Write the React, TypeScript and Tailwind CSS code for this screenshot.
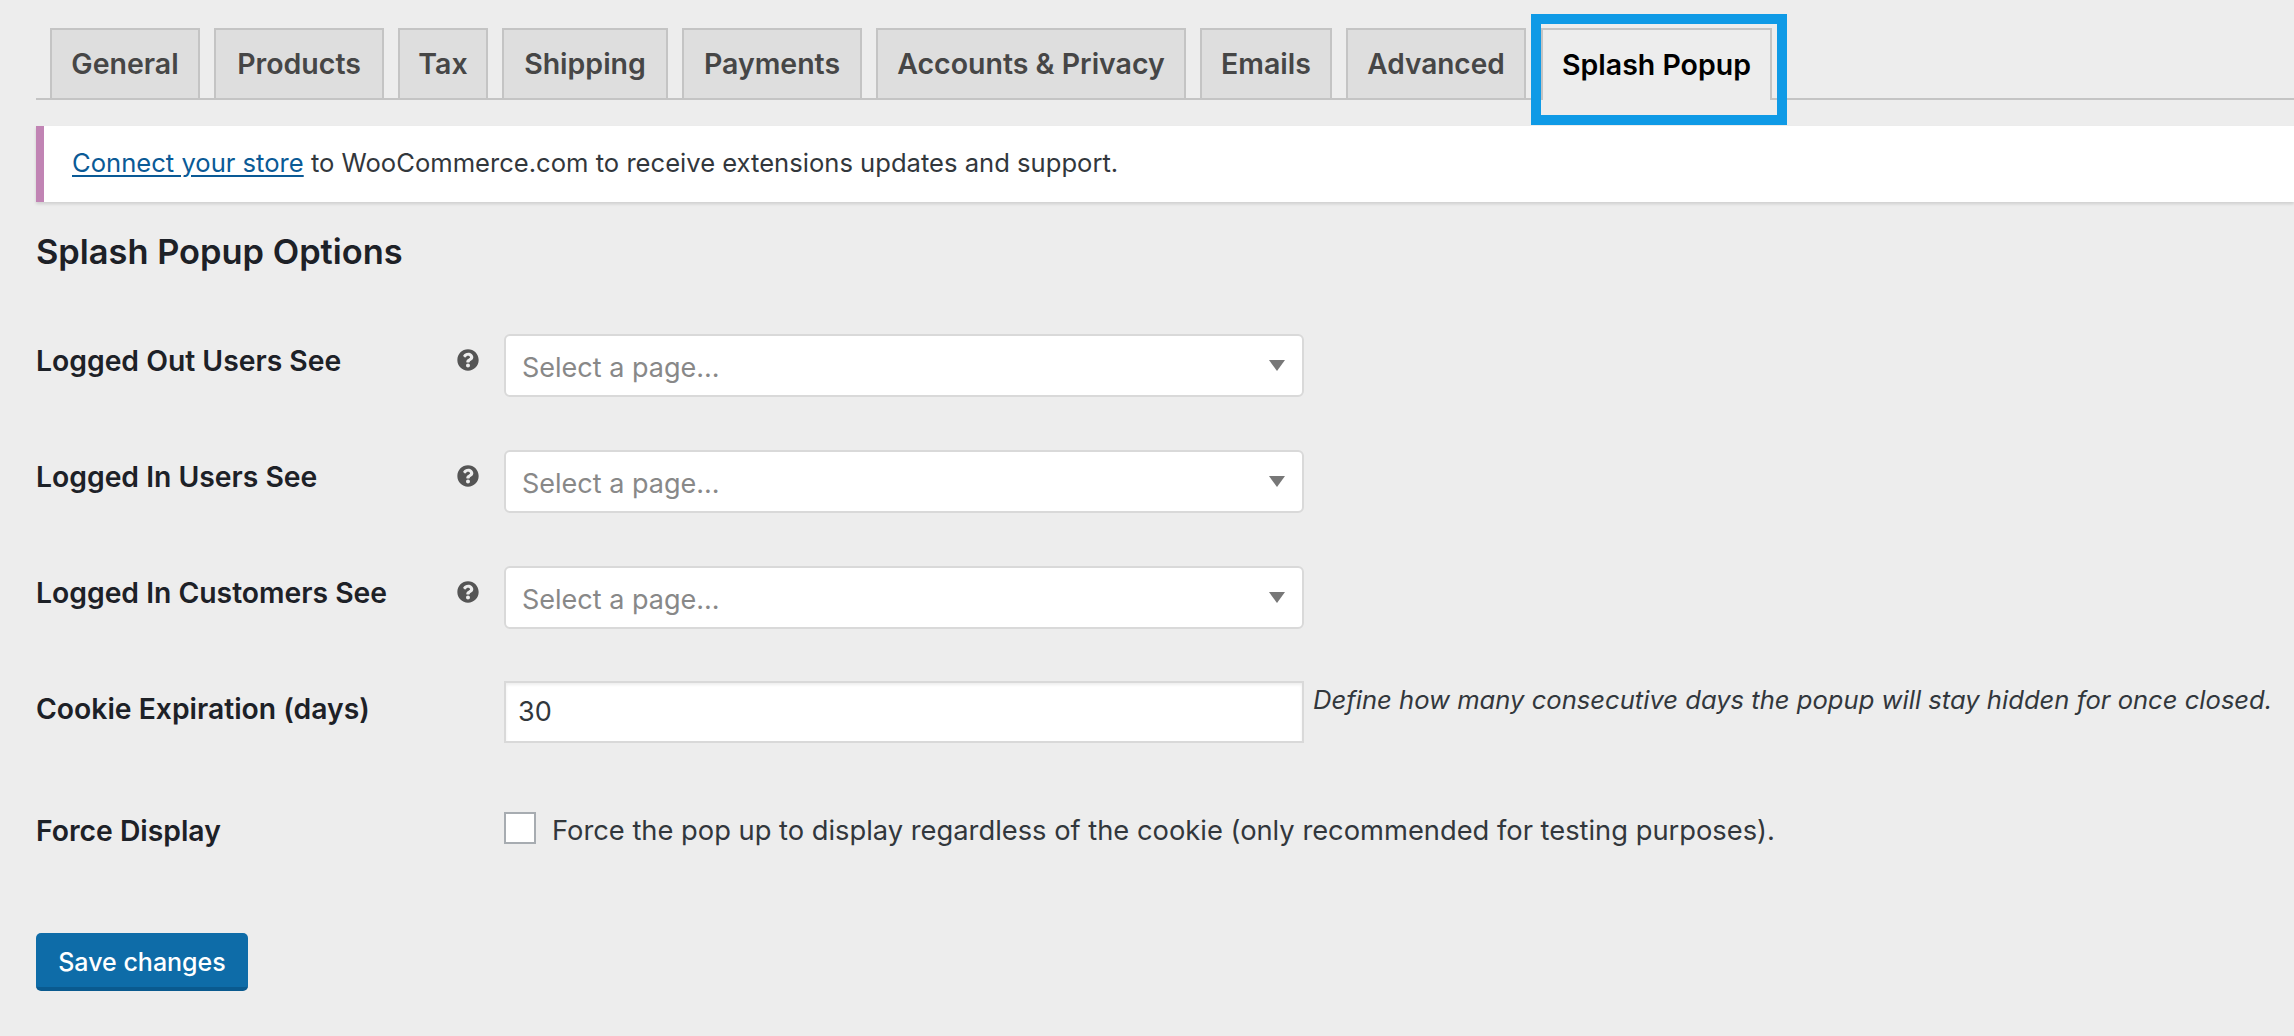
import React from "react";
import { FaQuestionCircle } from "react-icons/fa";

const font = "font-['Inter','Liberation_Sans',sans-serif]";

function Help() {
  return (
    <div className="w-[47px] shrink-0 pt-[15px]">
      <FaQuestionCircle className="h-[22px] w-[22px] text-[#555555]" />
    </div>
  );
}

function PageSelect() {
  return (
    <div className="flex h-[63px] w-[800px] items-center justify-between rounded-[6px] border-2 border-[#d9d9d9] bg-white pl-[16px] pr-[17px]">
      <span className="pt-[4px] text-[27px] leading-[30px] text-[#888888]">Select a page...</span>
      <svg width="16" height="11" viewBox="0 0 16 11" aria-hidden="true">
        <polygon points="0,0 16,0 8,11" fill="#777777" />
      </svg>
    </div>
  );
}

function SelectRow({ label }: { label: string }) {
  return (
    <div className="flex h-[63px] items-start">
      <div className="w-[421px] shrink-0 pt-[12px] text-[28.3px] font-semibold leading-[30px] text-[#1d2127]">{label}</div>
      <Help />
      <PageSelect />
    </div>
  );
}

export default function App() {
  return (
    <div className={`${font} h-[1036px] w-[2294px] overflow-hidden bg-[#ededed] pl-[36px]`}>
      <nav className="flex h-[100px] items-end gap-[14px] border-b-2 border-[#c4c4c4] pl-[14px] text-[28.5px] font-semibold leading-[30px] text-[#464646]">
        <a className="-mb-[2px] flex h-[72px] w-[150px] items-center justify-center border-2 border-[#c4c4c4] bg-[#dedede]">General</a>
        <a className="-mb-[2px] flex h-[72px] w-[170px] items-center justify-center border-2 border-[#c4c4c4] bg-[#dedede]">Products</a>
        <a className="-mb-[2px] flex h-[72px] w-[90px] items-center justify-center border-2 border-[#c4c4c4] bg-[#dedede]">Tax</a>
        <a className="-mb-[2px] flex h-[72px] w-[166px] items-center justify-center border-2 border-[#c4c4c4] bg-[#dedede]">Shipping</a>
        <a className="-mb-[2px] flex h-[72px] w-[180px] items-center justify-center border-2 border-[#c4c4c4] bg-[#dedede]">Payments</a>
        <a className="-mb-[2px] flex h-[72px] w-[310px] items-center justify-center border-2 border-[#c4c4c4] bg-[#dedede]">Accounts &amp; Privacy</a>
        <a className="-mb-[2px] flex h-[72px] w-[132px] items-center justify-center border-2 border-[#c4c4c4] bg-[#dedede]">Emails</a>
        <a className="-mb-[2px] flex h-[72px] w-[180px] items-center justify-center border-2 border-[#c4c4c4] bg-[#dedede] text-[28px]">Advanced</a>
        <a className="relative -mb-[2px] ml-[1px] flex h-[72px] w-[231px] items-center justify-center border-2 border-b-0 border-[#c4c4c4] bg-[#ededed] text-black">
          Splash Popup
          <span className="absolute -bottom-[25px] -left-[12px] -right-[17px] -top-[16px] border-[10px] border-[#0f9ae6]" />
        </a>
      </nav>

      <div className="mt-[26px] flex h-[76px] items-center border-l-[8px] border-[#c184b4] bg-white pl-[28px] text-[25.6px] leading-[30px] text-[#32373c] shadow-[0_2px_3px_rgba(0,0,0,0.13)]">
        <p className="-mt-[3px]">
          <a className="text-[#0a5a96] underline underline-offset-[3px]">Connect your store</a> to WooCommerce.com to receive extensions updates and support.
        </p>
      </div>

      <h2 className="mt-[32px] text-[34.4px] font-semibold leading-[36px] text-[#1d2127]">Splash Popup Options</h2>

      <div className="mt-[64px] flex flex-col gap-[53px]">
        <SelectRow label="Logged Out Users See" />
        <SelectRow label="Logged In Users See" />
        <SelectRow label="Logged In Customers See" />
      </div>

      <div className="mt-[52px] flex h-[62px] items-start">
        <div className="w-[468px] shrink-0 pt-[13px] text-[28.3px] font-semibold leading-[30px] text-[#1d2127]">Cookie Expiration (days)</div>
        <div className="flex h-[62px] w-[800px] items-center border-2 border-[#d9d9d9] bg-white pl-[12px] text-[27px] leading-[30px] text-[#32373c] shadow-[inset_0_2px_3px_rgba(0,0,0,0.07)]">30</div>
        <p className="ml-[9px] pt-[4px] text-[25.6px] italic leading-[30px] text-[#32373c]">Define how many consecutive days the popup will stay hidden for once closed.</p>
      </div>

      <div className="mt-[69px] flex items-start">
        <div className="w-[468px] shrink-0 pt-[4px] text-[28.3px] font-semibold leading-[30px] text-[#1d2127]">Force Display</div>
        <div className="h-[32px] w-[32px] shrink-0 border-2 border-[#a7acb1] bg-white" />
        <span className="ml-[16px] pt-[4px] text-[27.3px] leading-[30px] text-[#32373c]">Force the pop up to display regardless of the cookie (only recommended for testing purposes).</span>
      </div>

      <button className="mt-[87px] flex h-[58px] w-[212px] items-center justify-center rounded-[5px] border-b-[4px] border-[#0a5a8f] bg-[#0e6ca8] pt-[3px] text-[25px] font-medium leading-[30px] text-white">
        Save changes
      </button>
    </div>
  );
}
